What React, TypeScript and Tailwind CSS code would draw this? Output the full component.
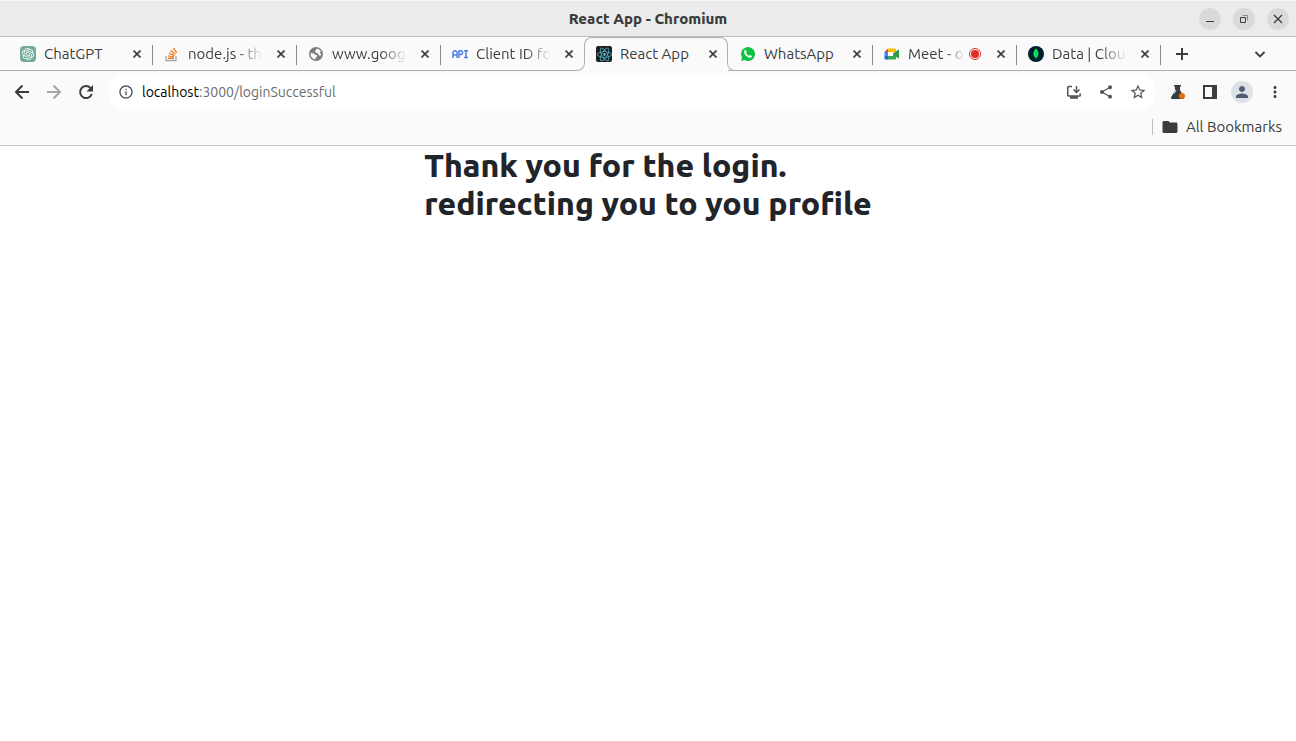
import type { ReactNode } from "react";
import { MdFolder, MdInfoOutline, MdMoreVert, MdPerson, MdShare, MdStarBorder } from "react-icons/md";
import { SiOpenai, SiReact } from "react-icons/si";

function ChatGptIcon() {
  return (
    <span className="flex size-4 items-center justify-center rounded-sm bg-[#74aa9c] text-white">
      <SiOpenai size={12} />
    </span>
  );
}

function StackOverflowIcon() {
  return (
    <svg viewBox="0 0 16 16" className="size-4" fill="none">
      <path d="M2 10v4.500h10V10" stroke="#a5a8aa" strokeWidth="1.300" />
      <path
        d="M4 12.300h6M4.200 9.900l5.900 1.200M4.900 7.100l5.500 2.600M6.600 4.400l4.700 3.900M9.400 1.800l3.300 5"
        stroke="#f48024"
        strokeWidth="1.400"
      />
    </svg>
  );
}

function GlobeIcon() {
  return (
    <svg viewBox="0 0 16 16" className="size-4">
      <circle cx="8" cy="8" r="7" fill="#7d7d7d" />
      <path fill="#fafafa" d="M2.500 7l3.500.5 1.500 1.500H9v1.500L7.500 12v1.500C4.500 13 2.300 10.500 2.500 7ZM7 5.500l1.500-2.800C10.500 2.800 12 3.700 13 5.500l-1.500 1 1.500 1.500v1.500H11L9.500 7H8Z" />
    </svg>
  );
}

function ReactIcon() {
  return (
    <span className="flex size-4 items-center justify-center rounded-xs bg-[#202020] text-[#50b8d2]">
      <SiReact size={15} />
    </span>
  );
}

function ApiIcon() {
  return (
    <svg viewBox="0 0 16 16" className="size-4" fill="none" stroke="#4f7fe0" strokeWidth="1.500">
      <path d="M1 12V6L2.500 4.750H3.500L5 6V12M1 9H5M7 12V4.750H9.500L10.500 5.750V7.500L9.500 8.500H7M12 4.750H16M14 4.750V11.500M12 11.500H16" />
    </svg>
  );
}

function WhatsAppIcon() {
  return (
    <svg viewBox="0 0 16 16" className="size-4">
      <path fill="#0dc143" d="M8 1a7 7 0 1 1-3.400 13.100L1 15l1-3.500A7 7 0 0 1 8 1Z" />
      <path fill="#fff" d="M5.800 4.200c-.2-.5-.8-.4-1.100 0C3.500 5.600 4 7.400 5.700 9.300c1.700 1.900 3.700 2.800 5.200 2.100.8-.4 1-1.100.8-1.500L10 9c-.4-.1-.7.500-1.100.9C7.700 9.400 6.800 8.500 6.200 7.300c.4-.4.7-.6.5-1.100Z" />
    </svg>
  );
}

function MeetIcon() {
  return (
    <svg viewBox="0 0 16 16" className="size-4">
      <path fill="#ea4335" d="M4 2.500V6H.5Z" />
      <path fill="#4285f4" d="M.5 6H4v4H.5Z" />
      <path fill="#1967d2" d="M.5 10H4v3.500H1.500a1 1 0 0 1-1-1Z" />
      <path fill="#fbbc04" d="M4 2.500h7a1 1 0 0 1 1 1V8L9 6H4Z" />
      <path fill="#fff" d="M4 6h5v4H4Z" />
      <path fill="#34a853" d="M4 10h5V8l3-2v6.500a1 1 0 0 1-1 1H4Z" />
      <path fill="#2b9a4b" d="M9 8l5-4.200q1-.6 1 .4v7.600q0 1-1 .4Z" />
    </svg>
  );
}

function MongoIcon() {
  return (
    <svg viewBox="0 0 16 16" className="size-4">
      <circle cx="8" cy="8" r="8" fill="#001e2b" />
      <path fill="#00ed64" d="M8 2.500c3.300 3.400 3.300 7 .3 9.500V13.500h-.6V12C4.700 9.500 4.700 5.900 8 2.500Z" />
      <path fill="#00a35c" d="M8 5h.5v6H8Z" />
    </svg>
  );
}

function FlaskIcon() {
  return (
    <svg viewBox="0 0 16 16" className="size-4">
      <path fill="#3c3c3c" d="M4 1h7v1.500h-1V6l4 7q.600 2-1 2H2q-1.600 0-1-1.500L5 6.500v-4H4Z" />
      <path stroke="#fafafa" d="M4 9.500L6 6" />
      <circle cx="12" cy="12" r="3" fill="#e0730f" />
    </svg>
  );
}

function LineIcon({ d }: { d: string }) {
  return (
    <svg viewBox="0 0 20 20" className="size-5" fill="none" stroke="currentColor" strokeWidth="2">
      <path d={d} />
    </svg>
  );
}

function ReloadIcon() {
  return (
    <svg viewBox="0 0 20 20" className="size-5" fill="none" stroke="currentColor" strokeWidth="2">
      <path d="M15.800 12A6 6 0 1 1 14.500 6" />
      <path d="M17 3v6.500h-6.500Z" fill="currentColor" stroke="none" />
    </svg>
  );
}

function InstallIcon() {
  return (
    <svg viewBox="0 0 16 16" className="size-4" fill="none" stroke="currentColor" strokeWidth="1.500">
      <path d="M6 2.500H2.500q-.750 0-.750.750v8q0 .750.750.750h11q.750 0 .750-.750V9.500" />
      <path d="M10.500 2v6M7.500 5.500l3 3 3-3" />
      <path d="M4 13.500h8" strokeWidth="2.500" />
    </svg>
  );
}

type TabData = { title: string; icon: ReactNode; active?: boolean; recording?: boolean; fade?: boolean };

const tabs: TabData[] = [
  { title: "ChatGPT", icon: <ChatGptIcon /> },
  { title: "node.js - th", icon: <StackOverflowIcon />, fade: true },
  { title: "www.goog", icon: <GlobeIcon />, fade: true },
  { title: "Client ID fo", icon: <ApiIcon />, fade: true },
  { title: "React App", icon: <ReactIcon />, active: true },
  { title: "WhatsApp", icon: <WhatsAppIcon /> },
  { title: "Meet - o", icon: <MeetIcon />, recording: true, fade: true },
  { title: "Data | Clou", icon: <MongoIcon />, fade: true },
];

function CloseGlyph() {
  return (
    <svg viewBox="0 0 8 8" className="size-2" stroke="#3c3c3c" strokeWidth="1.600">
      <path d="M.5.5l7 7M7.500.5l-7 7" />
    </svg>
  );
}

function Tab({ tab, divider }: { tab: TabData; divider: boolean }) {
  return (
    <div
      className={
        tab.active
          ? "relative flex w-36 min-w-0 items-center rounded-t-lg border border-b-0 border-[#b0b0b0] pb-px"
          : "relative flex w-36 min-w-0 items-center border-b border-[#b0b0b0] px-px pt-px"
      }
    >
      {tab.active && (
        <>
          <span className="absolute bottom-0 -left-2 size-2 bg-[#fafafa]">
            <span className="block size-2 rounded-br-lg border-r border-b border-[#b0b0b0]" />
          </span>
          <span className="absolute -right-2 bottom-0 size-2 bg-[#fafafa]">
            <span className="block size-2 rounded-bl-lg border-b border-l border-[#b0b0b0]" />
          </span>
        </>
      )}
      <a href="#tab" className="flex min-w-0 flex-1 items-center gap-2 pl-[11px]">
        <span className="shrink-0">{tab.icon}</span>
        <span
          className={
            tab.fade
              ? "min-w-0 flex-1 mask-r-from-65% mask-r-to-100% whitespace-nowrap"
              : "min-w-0 flex-1 whitespace-nowrap"
          }
        >
          {tab.title}
        </span>
        {tab.recording && (
          <span className="mr-0.5 -ml-1 flex size-3 shrink-0 items-center justify-center rounded-full border border-[#d93025]">
            <span className="size-2 rounded-full bg-[#d93025]" />
          </span>
        )}
      </a>
      <button aria-label={`Close ${tab.title}`} className="flex w-8 shrink-0 items-center justify-center pl-1">
        <CloseGlyph />
      </button>
      {divider && <span className="absolute top-2 -right-px h-5 w-px bg-[#8c8c8c]" />}
    </div>
  );
}

function WindowButton({ label, children }: { label: string; children: ReactNode }) {
  return (
    <button aria-label={label} className="flex size-5.5 items-center justify-center rounded-full bg-[#dadada]">
      <svg viewBox="0 0 10 10" className="size-2.5" fill="none" stroke="#3c3c3c">{children}</svg>
    </button>
  );
}

export default function App() {
  return (
    <div className="min-h-screen bg-white font-['Ubuntu','Noto_Sans',sans-serif] font-[450] text-[#3c3c3c]">
      <header className="bg-[#fafafa]">
        <div className="grid h-[37px] grid-cols-[1fr_auto_1fr] items-center border-t border-b border-t-[#f8f8f8] border-b-[#bdbdbd] bg-[#ebebeb]">
          <div className="col-start-2 pt-0.5 text-[15px] font-extrabold">React App - Chromium</div>
          <div className="flex justify-end gap-3 pr-[7px]">
            <WindowButton label="Minimize"><path d="M1 7.500h8" /></WindowButton>
            <WindowButton label="Restore">
              <path d="M1.500 3.500h5v5h-5Z" />
              <path d="M3.500 1.500h5v5" strokeOpacity=".5" />
            </WindowButton>
            <WindowButton label="Close"><path d="M1 1l8 8M9 1l-8 8" strokeWidth="1.300" /></WindowButton>
          </div>
        </div>

        <nav aria-label="Tabs" className="flex h-[34px] text-[15px]">
          <div className="w-2 shrink-0 border-b border-[#b0b0b0]" />
          {tabs.map((tab, i) => (
            <Tab key={tab.title} tab={tab} divider={!tab.active && !tabs[i + 1]?.active} />
          ))}
          <div className="flex flex-1 items-center justify-between border-b border-[#b0b0b0] pr-7 pl-3">
            <button aria-label="New tab">
              <LineIcon d="M10 4v12M4 10h12" />
            </button>
            <button aria-label="Search tabs">
              <svg viewBox="0 0 16 16" className="size-4" fill="none" stroke="#3c3c3c" strokeWidth="1.800">
                <path d="M3.500 6L8 10.500 12.500 6" />
              </svg>
            </button>
          </div>
        </nav>

        <div className="flex items-center gap-3 px-3 pt-1">
          <button aria-label="Back"><LineIcon d="M17 10H4.500M10.500 3.500L4 10l6.500 6.500" /></button>
          <button aria-label="Forward" className="text-[#a5a5a5]"><LineIcon d="M3 10h12.500M9.500 3.500L16 10l-6.500 6.500" /></button>
          <button aria-label="Reload"><ReloadIcon /></button>
          <div className="flex h-[34px] flex-1 items-center gap-2 rounded-full bg-white px-2.5 text-[#505357]">
            <button aria-label="Site information"><MdInfoOutline size={16} /></button>
            <div role="textbox" aria-label="Address" className="flex-1 text-sm text-[#6b6b6b]">
              <span className="text-black">localhost</span>:3000/loginSuccessful
            </div>
            <div className="flex gap-4">
              <button aria-label="Install"><InstallIcon /></button>
              <button aria-label="Share"><MdShare size={16} /></button>
              <button aria-label="Bookmark"><MdStarBorder size={18} className="-mx-px" /></button>
            </div>
          </div>
          <div className="flex items-center gap-4 pl-0.5">
            <button aria-label="Experiments"><FlaskIcon /></button>
            <button aria-label="Side panel">
              <svg viewBox="0 0 16 16" className="size-4"><path fill="#3c3c3c" fillRule="evenodd" d="M1 1h14v14H1ZM3 3v10h7V3Z" /></svg>
            </button>
            <button aria-label="Profile" className="-mx-[3px] flex size-5.5 items-center justify-center rounded-full bg-[#dee1e6] text-[#4f5b70]">
              <MdPerson size={18} />
            </button>
            <button aria-label="Menu"><MdMoreVert size={18} /></button>
          </div>
        </div>

        <div className="flex h-[37px] items-center justify-end border-b border-[#c8c8c8] pr-3.5 text-[15px]">
          <span className="h-4 w-px bg-[#bdbdbd]" />
          <button className="flex items-center gap-2 pl-2">
            <MdFolder size={18} className="-mr-px" />
            All Bookmarks
          </button>
        </div>
      </header>

      <main className="mx-auto w-fit">
        <h1 className="text-[32px] leading-[38px] font-extrabold text-[#212529]">
          Thank you for the login.
          <br />
          redirecting you to you profile
        </h1>
      </main>
    </div>
  );
}
